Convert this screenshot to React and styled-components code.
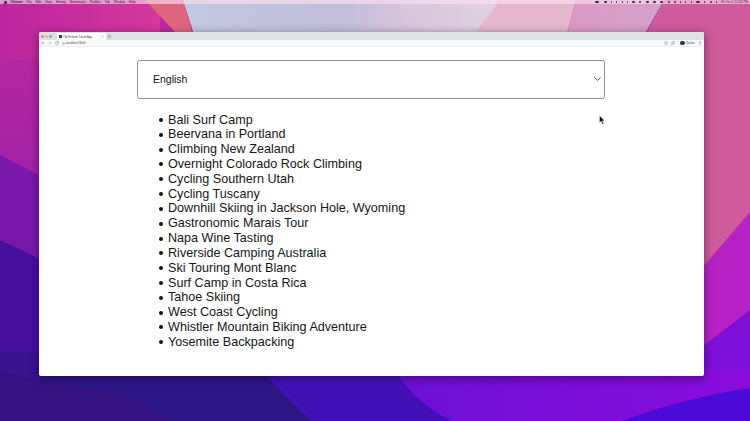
import React from 'react'
import styled, { createGlobalStyle } from 'styled-components'
import { ArrowLeft, ArrowRight, RotateCw, Star, Puzzle, MoreVertical, X, Plus, Info } from 'lucide-react'

const trips = [
    'Bali Surf Camp',
    'Beervana in Portland',
    'Climbing New Zealand',
    'Overnight Colorado Rock Climbing',
    'Cycling Southern Utah',
    'Cycling Tuscany',
    'Downhill Skiing in Jackson Hole, Wyoming',
    'Gastronomic Marais Tour',
    'Napa Wine Tasting',
    'Riverside Camping Australia',
    'Ski Touring Mont Blanc',
    'Surf Camp in Costa Rica',
    'Tahoe Skiing',
    'West Coast Cycling',
    'Whistler Mountain Biking Adventure',
    'Yosemite Backpacking',
]

const menus = ['Chrome', 'File', 'Edit', 'View', 'History', 'Bookmarks', 'Profiles', 'Tab', 'Window', 'Help']

// rough widths of the status icons in the menu bar
const statusIcons = [4, 3, 1, 1, 1, 1, 3, 2, 3, 3, 3, 2, 2, 1, 1, 1, 4, 1, 2, 1]

function Wallpaper() {
    return (
        <WallpaperSvg viewBox="0 0 750 421" preserveAspectRatio="none">
            <defs>
                <linearGradient id="base" x1="0" y1="0" x2="0" y2="1">
                    <stop offset="0" stopColor="#c02a9e" />
                    <stop offset="1" stopColor="#9c20a8" />
                </linearGradient>
                <linearGradient id="top" x1="0" y1="0" x2="1" y2="0">
                    <stop offset="0" stopColor="#bb259e" />
                    <stop offset="1" stopColor="#d6389c" />
                </linearGradient>
                <linearGradient id="lavender" x1="0" y1="0" x2="1" y2="0">
                    <stop offset="0" stopColor="#c3c8e2" />
                    <stop offset="0.5" stopColor="#c2bedc" />
                    <stop offset="0.7" stopColor="#d8c4dc" />
                    <stop offset="1" stopColor="#e0d2e2" />
                </linearGradient>
                <linearGradient id="violet" x1="0" y1="0" x2="1" y2="0">
                    <stop offset="0" stopColor="#6c10d4" />
                    <stop offset="1" stopColor="#8a0cdc" />
                </linearGradient>
                <linearGradient id="mauve" x1="0" y1="0" x2="1" y2="0">
                    <stop offset="0" stopColor="#dc98c2" />
                    <stop offset="1" stopColor="#d4a2cc" />
                </linearGradient>
            </defs>
            <rect width="750" height="421" fill="#4310b8" />
            <rect width="750" height="200" fill="url(#base)" />
            <path d="M0 0H160V60H0Z" fill="url(#top)" />
            <path d="M0 155L38 175L60 421H0Z" fill="#7a18ac" />
            <path d="M0 240L38 258L60 421H0Z" fill="#46109e" />
            <path d="M145 0L175 32V60H200L183 0Z" fill="#e0667f" />
            <path d="M183 0H500L460 60H202Z" fill="url(#lavender)" />
            <path d="M500 0H576L560 60H455Z" fill="#e6b8cf" />
            <path d="M576 0H664L630 60H560Z" fill="url(#mauve)" />
            <path d="M664 0H750V225L690 290H620V60H632Z" fill="#cf5a9c" />
            <path d="M750 212L690 282V360H750Z" fill="#b622c6" />
            <path d="M750 310L690 356V380H750Z" fill="#7e10d8" />
            <path d="M0 352H60V421H0Z" fill="#3a1290" />
            <path d="M40 360H250L311 421H170L130 396L40 380Z" fill="#2c1686" />
            <path d="M0 372L130 396L170 421H0Z" fill="#35127f" />
            <path d="M395 370H750V421H452C430 410 410 395 395 370Z" fill="url(#violet)" />
            <path d="M622 421C665 405 705 395 750 388V421Z" fill="#4a0ad8" />
        </WallpaperSvg>
    )
}

function App() {
    return (
        <Desktop>
            <GlobalStyle />
            <Wallpaper />
            <MenuBar>
                <MenuList>
                    <AppleDot />
                    {menus.map((m) => <span key={m}>{m}</span>)}
                </MenuList>
                <StatusArea>
                    {statusIcons.map((w, i) => <StatusIcon key={i} $w={w} />)}
                    <span>Fri Oct 1 12:34 PM</span>
                </StatusArea>
            </MenuBar>
            <BrowserWindow>
                <TabStrip>
                    <Lights>
                        <Light $color="#e9806f" />
                        <Light $color="#dfc06a" />
                        <Light $color="#6fc072" />
                    </Lights>
                    <Tab>
                        <Favicon />
                        <TabTitle>Old Fashion Travel App</TabTitle>
                        <X size={3} color="#555" />
                    </Tab>
                    <NewTab><Plus size={3} color="#555" /></NewTab>
                </TabStrip>
                <Toolbar>
                    <NavIcons>
                        <ArrowLeft size={4} color="#555" />
                        <ArrowRight size={4} color="#999" />
                        <RotateCw size={4} color="#555" />
                    </NavIcons>
                    <Address>
                        <Info size={3} color="#666" />
                        <span>localhost:3000</span>
                    </Address>
                    <NavIcons>
                        <Star size={4} color="#666" />
                        <Puzzle size={4} color="#666" />
                    </NavIcons>
                    <Profile>
                        <Avatar />
                        <span>Sasha</span>
                    </Profile>
                    <MoreVertical size={4} color="#666" />
                </Toolbar>
                <Page>
                    <Select>
                        <span>English</span>
                        <svg width="7" height="4" viewBox="0 0 7 4">
                            <path d="M0.4 0.4L3.5 3.4L6.6 0.4" fill="none" stroke="#444" strokeWidth="0.9" />
                        </svg>
                    </Select>
                    <TripList>
                        {trips.map((trip) => <li key={trip}>{trip}</li>)}
                    </TripList>
                    <Cursor viewBox="0 0 6 10">
                        <path d="M0.5 0.5V7.6L2.2 6.2L3.4 9.2L4.6 8.7L3.4 5.8H5.6Z" fill="#111" stroke="#fff" strokeWidth="0.4" />
                    </Cursor>
                </Page>
            </BrowserWindow>
        </Desktop>
    )
}

const GlobalStyle = createGlobalStyle`
    html, body {
        margin: 0;
        padding: 0;
        overflow: hidden;
    }
`

const Desktop = styled.div`
    position: relative;
    width: 750px;
    height: 421px;
    overflow: hidden;
    font-family: "Liberation Sans", Arial, sans-serif;
`

const WallpaperSvg = styled.svg`
    position: absolute;
    inset: 0;
    width: 750px;
    height: 421px;
`

const MenuBar = styled.div`
    position: relative;
    height: 4px;
    padding: 0 2px 0 4px;
    display: flex;
    justify-content: space-between;
    align-items: center;
    background: rgba(255, 225, 245, 0.6);
    color: #2a2030;
    font-size: 3.2px;
    line-height: 4px;
`

const MenuList = styled.div`
    display: flex;
    align-items: center;
    gap: 4px;
    span:first-of-type {
        font-weight: 700;
    }
`

const AppleDot = styled.div`
    width: 2.5px;
    height: 3px;
    border-radius: 50%;
    background: #2a2030;
`

const StatusArea = styled.div`
    display: flex;
    align-items: center;
    gap: 4.3px;
`

const StatusIcon = styled.div`
    width: ${(p) => p.$w}px;
    height: 2.4px;
    border-radius: 1px;
    background: #3a3040;
`

const BrowserWindow = styled.div`
    position: relative;
    width: 665px;
    height: 344px;
    margin: 28px 0 0 38.5px;
    background: #fff;
    border-radius: 2px;
    box-shadow: 0 2px 10px rgba(20, 0, 40, 0.5);
    overflow: hidden;
`

const TabStrip = styled.div`
    height: 8px;
    background: #dfe1e5;
    display: flex;
    align-items: flex-end;
    padding-left: 2.5px;
`

const Lights = styled.div`
    display: flex;
    gap: 1px;
    align-self: center;
    margin-right: 4.5px;
`

const Light = styled.div`
    width: 3px;
    height: 3px;
    border-radius: 50%;
    background: ${(p) => p.$color};
`

const Tab = styled.div`
    width: 49px;
    height: 7px;
    padding: 0 2px;
    box-sizing: border-box;
    background: #fff;
    border-radius: 2px 2px 0 0;
    display: flex;
    align-items: center;
    gap: 1.5px;
    font-size: 2.8px;
    color: #333;
`

const TabTitle = styled.span`
    flex: 1;
    white-space: nowrap;
    overflow: hidden;
`

const Favicon = styled.div`
    width: 3px;
    height: 3px;
    background: #2f3b45;
    flex: none;
`

const NewTab = styled.div`
    width: 5px;
    height: 5px;
    margin: 0 0 1px 1px;
    border-radius: 50%;
    background: #cfd2d7;
    display: flex;
    align-items: center;
    justify-content: center;
`

const Toolbar = styled.div`
    height: 7px;
    background: #f7f8f9;
    border-bottom: 1px solid #eceded;
    box-sizing: border-box;
    display: flex;
    align-items: center;
    gap: 3px;
    padding: 0 2px 0 2px;
`

const NavIcons = styled.div`
    display: flex;
    align-items: center;
    gap: 3px;
`

const Address = styled.div`
    flex: 1;
    display: flex;
    align-items: center;
    gap: 1.5px;
    font-size: 3px;
    color: #444;
`

const Profile = styled.div`
    display: flex;
    align-items: center;
    gap: 1px;
    margin-left: 2px;
    font-size: 3px;
    color: #444;
`

const Avatar = styled.div`
    width: 4.5px;
    height: 4.5px;
    border-radius: 50%;
    background: #333;
`

const Page = styled.main`
    position: relative;
    padding: 13px 98.5px 0;
`

const Select = styled.div`
    height: 39px;
    box-sizing: border-box;
    border: 1px solid #8f8f8f;
    border-radius: 2.5px;
    padding: 0 3px 1px 15px;
    display: flex;
    align-items: center;
    justify-content: space-between;
    font-size: 10.5px;
    color: #111;
`

const TripList = styled.ul`
    list-style: none;
    margin: 13.6px 0 0;
    padding: 0 0 0 21.5px;
    font-size: 12.6px;
    line-height: 14.82px;
    color: #151515;

    li {
        display: flex;
        align-items: center;
        gap: 5.5px;
    }

    li::before {
        content: "";
        width: 4px;
        height: 4px;
        border-radius: 50%;
        background: #111;
    }
`

const Cursor = styled.svg`
    position: absolute;
    left: 560px;
    top: 68px;
    width: 6px;
    height: 10px;
`

export default App
